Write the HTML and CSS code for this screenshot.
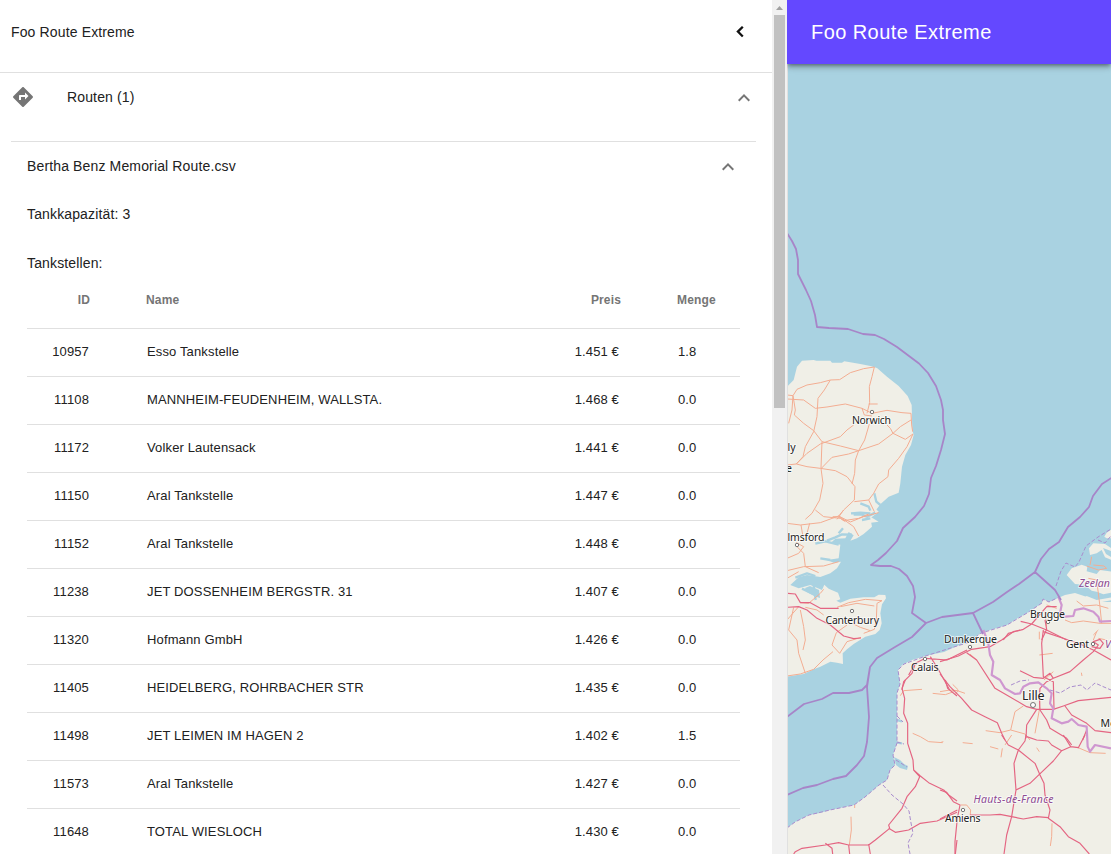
FILE: index.html
```html
<!DOCTYPE html>
<html lang="de">
<head>
<meta charset="utf-8">
<title>Foo Route Extreme</title>
<link rel="stylesheet" href="styles.css">
</head>
<body>
<div class="app">
  <aside class="drawer">
    <div class="drawer-content">
      <div class="drawer-header">
        <span>Foo Route Extreme</span>
        <svg class="icon icon-dark" viewBox="0 0 24 24"><path d="M14.800 6.700 9.900 11.600l4.900 4.900" fill="none" stroke="currentColor" stroke-width="2.300"/></svg>
      </div>
      <div class="routes-header">
        <svg class="icon" viewBox="0 0 24 24"><path fill="currentColor" d="M21.71 11.29l-9-9c-.39-.39-1.02-.39-1.41 0l-9 9c-.39.39-.39 1.02 0 1.41l9 9c.39.39 1.02.39 1.41 0l9-9c.39-.38.39-1.01 0-1.41zM14 14.5V12h-4v3H8v-4c0-.55.45-1 1-1h5V7.5l3.5 3.5-3.5 3.5z"/></svg>
        <span class="routes-title">Routen (1)</span>
        <svg class="icon icon-toggle" viewBox="0 0 24 24"><path fill="currentColor" d="M12 8l-6 6 1.410 1.410L12 10.830l4.590 4.580L18 14z"/></svg>
      </div>
      <section class="route">
        <div class="route-header">
          <span>Bertha Benz Memorial Route.csv</span>
          <svg class="icon icon-toggle" viewBox="0 0 24 24"><path fill="currentColor" d="M12 8l-6 6 1.410 1.410L12 10.830l4.590 4.580L18 14z"/></svg>
        </div>
        <p class="line">Tankkapazität: 3</p>
        <p class="line line-stations">Tankstellen:</p>
        <table class="stations">
          <thead><tr><th class="num">ID</th><th class="name">Name</th><th class="num price">Preis</th><th class="amount">Menge</th></tr></thead>
          <tbody>
            <tr><td class="num">10957</td><td class="name">Esso Tankstelle</td><td class="num price">1.451 €</td><td class="amount">1.8</td></tr>
            <tr><td class="num">11108</td><td class="name">MANNHEIM-FEUDENHEIM, WALLSTA.</td><td class="num price">1.468 €</td><td class="amount">0.0</td></tr>
            <tr><td class="num">11172</td><td class="name">Volker Lautensack</td><td class="num price">1.441 €</td><td class="amount">0.0</td></tr>
            <tr><td class="num">11150</td><td class="name">Aral Tankstelle</td><td class="num price">1.447 €</td><td class="amount">0.0</td></tr>
            <tr><td class="num">11152</td><td class="name">Aral Tankstelle</td><td class="num price">1.448 €</td><td class="amount">0.0</td></tr>
            <tr><td class="num">11238</td><td class="name">JET DOSSENHEIM BERGSTR. 31</td><td class="num price">1.407 €</td><td class="amount">0.0</td></tr>
            <tr><td class="num">11320</td><td class="name">Hofmann GmbH</td><td class="num price">1.426 €</td><td class="amount">0.0</td></tr>
            <tr><td class="num">11405</td><td class="name">HEIDELBERG, ROHRBACHER STR</td><td class="num price">1.435 €</td><td class="amount">0.0</td></tr>
            <tr><td class="num">11498</td><td class="name">JET LEIMEN IM HAGEN 2</td><td class="num price">1.402 €</td><td class="amount">1.5</td></tr>
            <tr><td class="num">11573</td><td class="name">Aral Tankstelle</td><td class="num price">1.427 €</td><td class="amount">0.0</td></tr>
            <tr><td class="num">11648</td><td class="name">TOTAL WIESLOCH</td><td class="num price">1.430 €</td><td class="amount">0.0</td></tr>
          </tbody>
        </table>
      </section>
    </div>
    <div class="scrollbar">
      <svg class="scroll-arrow" viewBox="0 0 15 15"><path d="M4 10h7L7.500 6z"/></svg>
      <div class="scroll-thumb"></div>
    </div>
  </aside>
  <main class="main">
    <header class="topbar">Foo Route Extreme</header>
    <svg class="map" viewBox="788 64 323 790" preserveAspectRatio="none">
      <!-- land -->
      <g class="land">
        <path transform="translate(787 350) scale(.33333)" d="M0 110 20 90 30 50 45 32 80 30 88 32 130 32 135 38 165 38 172 34 220 42 250 48 270 54 300 80 335 108 362 138 374 165 376 240 380 255 372 285 355 315 345 350 340 400 335 428 305 440 280 463 262 487 272 488 250 500 275 515 240 520 0 520z"/>
        <path transform="translate(787 510) scale(.33333)" d="M0-10H260L275 5 250 25 255 50 230 72 210 85 190 92 200 76 185 66 175 85 145 86 132 98 160 104 155 145 120 150 140 158 162 155 150 175 130 190 100 201 60 195 35 202 10 225 35 235 70 225 105 240 112 224 125 236 153 248 160 268 148 272 160 278 190 266 230 262 262 262 275 254 295 255 297 265 285 283 280 310 284 340 278 360 265 372 235 380 200 402 180 418 167 430 168 462 150 458 130 455 100 470 80 478 50 492 0 500z"/>
        <path d="M787 828 795 822 809 815 820 813 830 810 854 805 865 797 879 785 887 780 890 770 895 765 893 755 897 743 897 717 897 693 900 684 898 670 902 665 912 660 927 655.500 944 652 957 646 970 642 980 633.500 990 630 1007 625 1018 618 1027 613 1042 603 1043 599 1049 602 1065 595 1075 593 1087 597 1097 602 1111 602V854H787z"/>
        <path transform="translate(950 460) scale(.33333)" d="M350 345 365 325 395 314 412 320 410 334 440 342 450 330 485 335V398L460 403 440 395 425 392 405 375 375 372zM417 265 430 250 465 252 485 265V300L465 292 455 270 440 280 420 285zM463 230 470 218 485 208V235L470 235zM395 418 410 408 440 420 485 412V420L445 428z"/>
      </g>
      <!-- estuaries and inlets -->
      <g class="water-line">
        <path transform="translate(787 350) scale(.33333)" d="M192 490 220 488 250 490M220 460 245 470 250 482M262 430 268 455 280 465M200 494H232"/>
        <path transform="translate(787 510) scale(.33333)" d="M265 8 240 20 225 16M250 25 225 30M195 74 165 73 145 82 120 92M155 104 115 94 85 101M155 70 168 55M130 150 100 145M25 203 60 190 85 198M45 236 75 250 95 243M80 225 86 270"/>
        <path transform="translate(787 680) scale(.33333)" d="M330 120 345 124M330 188 345 190"/>
      </g>
      <g class="inlet">
        <path d="M894 757 900 760 904 764 908 766 907 770 900 768 896 765z"/>
        <path d="M805 588 810 586 819 590 820 598 814 596 807 592z"/>
        <path d="M1111 551 1103 548 1106 554 1111 557z"/>
      </g>
      <!-- roads -->
      <g class="road">
        <g transform="translate(787 350) scale(.33333)">
          <path d="M0 135 18 137 30 118 60 105 100 98 130 90 158 89 190 68 230 56 262 51 255 80 247 110 248 158 240 190M130 90 112 120 93 145 90 200 80 245 55 290 48 320 28 342M0 147 50 150 85 175 120 171 175 162 225 175 255 190 300 181 345 188 372 190 374 225 377 245M18 137 25 180 22 195 50 220 80 242 105 275 160 288 215 302 275 282 318 250 355 268 378 252M18 137 15 180 5 220M225 175 232 195 255 198M245 162H272M372 210 340 230 318 250 310 235 300 225M247 222 233 270 215 302 205 330 203 370 195 402M28 342 60 310 100 282 160 260 180 240 200 225M0 345 28 342 60 350 100 355 145 362 180 380 204 410 202 450 170 480 150 508M105 275 102 355 108 400 98 450 75 490 55 508M103 355 135 322 185 312 215 302M378 252 360 290 335 325 305 360 303 380 275 402 260 430 245 450 202 455M245 450 262 485M137 500 155 500 170 512 215 505 245 492"/>
        </g>
        <g transform="translate(787 510) scale(.33333)">
          <path d="M0 40 40 45 100 38 155 18 190 36 230 20 275 8M155 18 170 0M155 18 200 50 215 78M175 35 160 25 110 20 85 0M42 45 48 80 60 70 68 40M28 98 50 110 35 130 0 145M30 110 50 130 55 170 95 188M0 182 50 170 110 168 155 155M0 205 35 185M40 278 65 280 100 250 110 238M35 290 0 330M20 292 5 360 30 390 35 430 55 490M40 300 50 350 55 390 48 420M150 292 185 278 235 268 285 272 270 280 268 330 262 358 230 370M160 290 210 280 262 288M195 340 220 352 250 362M148 368 180 345M148 368 135 405 158 430 180 395 222 382M0 498 40 492 80 478 108 450 138 425M110 315 90 300 55 292"/>
        </g>
        <g transform="translate(950 460) scale(.33333)"><path d="M410 318 445 330 470 325 462 318 430 315M425 290 420 315M415 355 440 360 450 440M380 423 400 438 440 435 475 445M450 440 455 490M285 455 290 500M345 480 365 488 400 483 450 490 483 490M430 540 440 515M290 435 320 445"/></g>
        <g transform="translate(787 680) scale(.33333)"><path d="M340 47 350 32 405 28M437 40 475 44 500 35M377 160 400 170 425 185 467 188M192 410 193 450 187 495M203 375V384"/></g>
        <g transform="translate(940 630) scale(.33333)"><path d="M0 185 30 180 52 182 75 190M38 163 55 180 45 195M250 228 225 245 212 300M137 302 180 308 212 300 255 312 270 330M298 75 338 70M298 5V28M424 128 426 138M312 150 340 125M460 15 475 0M500 30 475 25M90 72 110 90M300 200 298 240 285 310M68 338 98 341M150 350 175 357M187 355 183 382M195 345 215 315M0 338 10 335M290 353 298 365M412 352 450 368 497 370"/></g>
        <g transform="translate(940 735) scale(.33333)"><path d="M62 210 80 210 92 225 90 245M336 265 335 305 331 333"/></g>
      </g>
      <g class="motorway">
        <g transform="translate(787 510) scale(.33333)">
          <path d="M0 250 25 252 40 278 70 278 100 295 155 295M0 292 35 290 60 300 90 325 130 345 170 378 200 386 222 384M365 495 385 460 415 445 480 450 540 420M345 540 350 515 375 490 385 460M430 440 455 480 488 540"/>
        </g>
        <g transform="translate(950 460) scale(.33333)"><path d="M160 540 175 520 220 508 245 492 290 440 320 440M212 484 245 492 290 510 350 540M285 480 290 508 275 540"/></g>
        <g transform="translate(787 680) scale(.33333)">
          <path d="M355 0 345 25 353 55 350 100 362 130 362 190 378 240 380 270 400 288 425 308 470 330 485 345 510 363M380 270 398 290 385 320 360 350 345 385 305 435 308 445 265 480 245 495 185 495 155 488 115 495 45 505 25 515 20 522M305 445 325 457 365 450 400 430 450 423 510 397M115 490 135 505 137 522M185 495 188 522M245 492 250 522M475 0 482 25 510 48M510 480 505 522"/>
        </g>
        <g transform="translate(940 630) scale(.33333)">
          <path d="M0 95 55 78 95 58 150 50 185 30 220 5 240 0M80 68 110 90 165 175 200 195 260 230 290 238 340 238 370 228 415 212 513 202M0 132 30 170 65 205 95 240 135 260 172 278 185 310 195 330M310 0 305 40 310 140 340 155 342 235M310 5 385 30 420 42 460 60 513 90M240 122 280 142 310 145 330 130 340 145 320 155 300 175 298 200 300 240 320 270 330 295 380 325 395 345M340 145 390 125 430 90 460 65 475 45 460 35 480 28 490 40 480 55 455 50M290 238 260 285 258 325M375 228 395 255 440 280 465 302 513 308M440 300 428 330"/>
        </g>
        <g transform="translate(940 735) scale(.33333)">
          <path d="M185 0 205 30 235 45 285 85 300 120 312 145 315 180 330 225 325 250 360 275 385 305 420 325 448 357M258 0 255 18 235 45 222 85 228 165 215 245 200 300 192 357M228 165 270 145 298 118 340 78 365 47 392 35 415 38 435 0M260 5 290 15 325 18 335 30 365 47M370 0 392 35M0 165 20 172 40 200 60 210 52 250 45 320 45 357M0 252 52 225M90 240 150 240 180 238 215 245 250 252 290 245 325 248"/>
        </g>
      </g>
      <!-- boundaries -->
      <g class="border-land">
        <path transform="translate(940 630) scale(.33333)" d="M130 0 145 40 150 75 160 95 155 135 180 150 195 175 225 192 240 190 250 170 270 160 295 157 320 175 335 190 330 220 340 235 335 265 365 280 385 275 395 267 415 285 440 290 443 350 450 365 465 345 513 355"/>
        <path transform="translate(950 460) scale(.33333)" d="M325 410 335 435 330 460 345 470 370 468 375 450 400 445 430 455 445 470 450 485 483 483"/>
      </g>
      <g class="border-dash">
        <path d="M787 828 795 822 809 815 830 810 854 805 865 797 879 785 887 780 890 770 895 765 893 755 897 743 897 693 900 684 898 670 904 664 927 655.500 957 646 970 642 980 633.500 1007 625 1027 613 1042 603 1043 599 1049 602 1057 598M1056 586 1061 571 1066 563 1075 567 1079 562 1086 546 1098 537 1111 529M1098 540 1105 543 1111 536M883 785 892 795 903 804 909 811 911 823 913 833 908 843 910 854M1050 690 1060 693 1070 687 1081 685 1087 690 1095 683 1104 687 1111 690M1011 685 1020 681 1029 680M897 716 903 722M897 742 904 744M896 760 907 767"/>
      </g>
      <g class="border-sea">
        <path d="M787 233 792 241 796 249 798 260 798 274 806 290 811 301 815 315 817 327 829 328 848 329 863 334 875 335 884 339 897 347 909 356 919 363.500 928 373 936 386 941 400 943 410 943 420 945 434 941 450 936 466 931 478 929 494 924 506 915 517 903 528 897 541 886 553 878 560 871 565 880 566 891 566 899 569 907 576 913 586 915 597 912 613 926 623 942 617 973 613 993 602 1007 592 1019 584 1035 572 1055 590 1061 600M1035 572 1041 559 1049 549 1059 542 1068 527 1080 517 1089 507 1093 496 1102 484 1113 477M973 613 983 634"/>
        <path d="M926 623 912 637 895 647 877 658 870 667 867 685 862 690 849 693 833 693 822 699 804 704 787 717M870 667 867 687 869 717 867 742 864 756 857 765 846 776 833 779 817 785 803 788 787 795"/>
      </g>
      <!-- places -->
      <g class="dot">
        <circle cx="872" cy="412" r="1.700"/><circle cx="797" cy="545" r="1.700"/><circle cx="852" cy="611" r="1.700"/><circle cx="925" cy="659" r="1.700"/><circle cx="970" cy="647" r="1.700"/><circle cx="1048" cy="622" r="1.700"/><circle cx="1093" cy="644" r="1.700"/><circle cx="1033" cy="705" r="2.500"/><circle cx="963" cy="810" r="1.700"/>
      </g>
      <g class="place">
        <text x="852" y="424" textLength="39">Norwich</text>
        <text x="787.500" y="450.500">ly</text>
        <text x="786" y="472">e</text>
        <text x="787.500" y="541" textLength="37">lmsford</text>
        <text x="825.500" y="623.500" textLength="53.500">Canterbury</text>
        <text x="911" y="671" textLength="27.500">Calais</text>
        <text x="944" y="643" textLength="53">Dunkerque</text>
        <text x="1030" y="618" textLength="35">Brugge</text>
        <text x="1066" y="648" textLength="23">Gent</text>
        <text class="city" x="1022" y="700" textLength="22.500">Lille</text>
        <text x="1100.500" y="726.500">Mo</text>
        <text x="945" y="822" textLength="35.500">Amiens</text>
      </g>
      <g class="region">
        <text x="1079" y="587">Zeelan</text>
        <text x="1105" y="648">V</text>
        <text x="973.500" y="802.500" textLength="80">Hauts-de-France</text>
      </g>
    </svg>
  </main>
</div>
</body>
</html>
```
FILE: styles.css
```css
* { box-sizing: border-box; }
body {
  margin: 0;
  overflow: hidden;
  font-family: "Liberation Sans", Arial, sans-serif;
  font-size: 14px;
  line-height: 20px;
  letter-spacing: .14px;
  color: #212121;
}
.app { display: flex; height: 854px; width: 1111px; }
.drawer { display: flex; width: 787px; background: #fff; overflow: hidden; }
.drawer-content { width: 772px; overflow: hidden; }
.icon { width: 24px; height: 24px; flex: none; color: #757575; }
.icon-dark { color: #111; }
.drawer-header {
  display: flex;
  justify-content: space-between;
  height: 73px;
  padding: 22px 20px 0 11px;
  border-bottom: 1px solid #e0e0e0;
}
.drawer-header .icon { margin-top: -2px; }
.routes-header { display: flex; height: 68px; padding: 14px 16px 0 11px; }
.routes-header .icon { margin-top: -2px; }
.routes-title { flex: 1; margin-left: 32px; }
.route {
  margin: 0 16px 0 11px;
  padding: 14px 16px 0;
  border-top: 1px solid #e0e0e0;
}
.route-header { display: flex; justify-content: space-between; height: 48px; }
.routes-header .icon-toggle, .route-header .icon-toggle { margin-top: -1px; }
.line { margin: 0; height: 49px; }
.line-stations { height: 19px; }
.stations {
  width: 713px;
  table-layout: fixed;
  border-collapse: separate;
  border-spacing: 0;
  font-size: 13px;
  letter-spacing: .14px;
}
.stations th {
  height: 56px;
  padding: 0;
  font-size: 12px;
  text-align: left;
  color: #757575;
  letter-spacing: .15px;
}
.stations td { height: 48px; padding: 0 0 2px; border-top: 1px solid #e0e0e0; }
.stations .num { width: 62px; text-align: right; }
.stations th.num { width: 63px; }
.stations .name { width: 441px; padding-left: 57px; }
.stations th.name { padding-left: 56px; }
.stations th.price { width: 90px; }
.stations td.num { padding-right: 1px; }
.stations td.price { padding-right: 2px; }
.stations .amount { padding-left: 57px; }
.stations th.amount { width: 119px; padding-left: 56px; }
.scrollbar { width: 15px; background: #f1f1f1; }
.scroll-arrow { display: block; width: 15px; height: 15px; fill: #a0a0a0; }
.scroll-thumb { width: 11px; height: 393px; margin-left: 2px; background: #c1c1c1; }
.main { display: flex; flex-direction: column; width: 324px; background: #e0e0e0; }
.topbar {
  position: relative;
  height: 64px;
  flex: none;
  padding-left: 24px;
  font-size: 20px;
  line-height: 64px;
  letter-spacing: .43px;
  color: #fff;
  background: #6448ff;
  clip-path: inset(0 0 -12px 0);
  box-shadow: 0 2px 4px -1px rgba(0,0,0,.4), 0 4px 5px rgba(0,0,0,.14), 0 1px 10px rgba(0,0,0,.12);
}
.map { display: block; width: 323px; height: 790px; margin-left: 1px; background: #a9d2e1; }
.map path { stroke-linejoin: round; }
.land { fill: #f0efe7; }
.water-line { fill: none; stroke: #a9d2e1; stroke-width: 7; }
.inlet { fill: #a9d2e1; }
.road { fill: none; stroke: #f3ad92; stroke-width: 3; }
.motorway { fill: none; stroke: #e46582; stroke-width: 3.5; }
.border-land { fill: none; stroke: #cf97d0; stroke-width: 6.5; }
.border-dash { fill: none; stroke: #a98cce; stroke-width: 1; stroke-dasharray: 4 2; }
.border-sea { fill: none; stroke: #a785c8; stroke-width: 1.8; }
.dot { fill: #fff; stroke: #555; stroke-width: .8; }
.place, .region {
  font-family: "Noto Sans", sans-serif;
  font-size: 10.5px;
  letter-spacing: 0;
  fill: #222;
  stroke: rgba(255,255,255,.65);
  stroke-width: 2px;
  stroke-linejoin: round;
  paint-order: stroke;
}
.place .city { font-size: 12.5px; }
.region { font-style: italic; fill: #8d4b92; }
```
